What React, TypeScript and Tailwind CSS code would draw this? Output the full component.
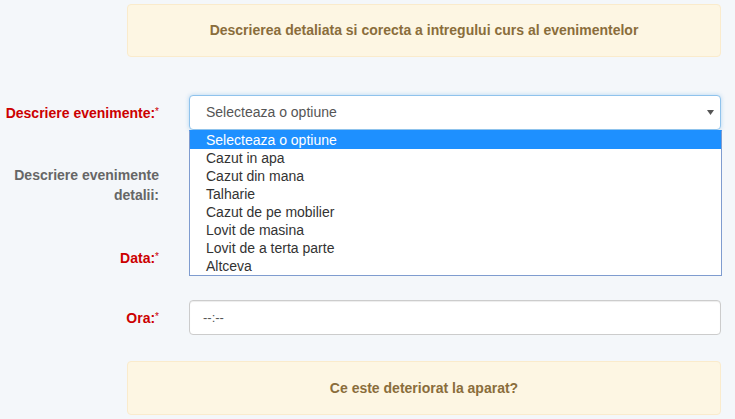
import React from "react";

const options = [
  "Selecteaza o optiune",
  "Cazut in apa",
  "Cazut din mana",
  "Talharie",
  "Cazut de pe mobilier",
  "Lovit de masina",
  "Lovit de a terta parte",
  "Altceva",
];

function Req() {
  return <span className="text-[10px] align-top relative top-[-1px] font-normal">*</span>;
}

export default function App() {
  return (
    <div
      className="w-[735px] h-[419px] bg-[#f4f7fa] overflow-hidden relative text-[14px]"
      style={{ fontFamily: '"Liberation Sans", Arial, sans-serif' }}
    >
      <div className="pt-[4px] pl-[127px] pr-[14px]">
        <div className="h-[53px] rounded-[4px] border border-[#faebcc] bg-[#fdf6e3] flex items-center justify-center">
          <span className="font-bold text-[#8a6d3b]">
            Descrierea detaliata si corecta a intregului curs al evenimentelor
          </span>
        </div>
      </div>

      {/* row 1 */}
      <div className="flex mt-[38px] pr-[14px]">
        <div className="w-[174px] pr-[15px] pt-[8px] text-right font-bold leading-[20px] text-[#cc0000]">
          Descriere evenimente:<Req />
        </div>
        <div className="flex-1 pl-[15px]">
          <div className="h-[35px] rounded-[4px] border border-[#8fc3ec] bg-white shadow-[0_0_4px_rgba(102,175,233,0.45)] flex items-center pl-[16px] pr-[6px] text-[#555]">
            <span className="flex-1">Selecteaza o optiune</span>
            <svg width="7" height="5" viewBox="0 0 7 5">
              <polygon points="0,0 7,0 3.5,5" fill="#555" />
            </svg>
          </div>
        </div>
      </div>

      {/* row 2 */}
      <div className="flex mt-[27px] pr-[14px]">
        <div className="w-[174px] pr-[15px] pt-[8px] text-right font-bold leading-[20px] text-[#666]">
          Descriere evenimente
          <br />
          detalii:
        </div>
        <div className="flex-1 pl-[15px]">
          <div className="h-[58px] rounded-[4px] border border-[#ccc] bg-white" />
        </div>
      </div>

      {/* row 3 */}
      <div className="flex mt-[25px] pr-[14px]">
        <div className="w-[174px] pr-[15px] pt-[8px] text-right font-bold leading-[20px] text-[#cc0000]">
          Data:<Req />
        </div>
        <div className="flex-1 pl-[15px]">
          <div className="h-[35px] rounded-[4px] border border-[#ccc] bg-white" />
        </div>
      </div>

      {/* row 4 */}
      <div className="flex mt-[25px] pr-[14px]">
        <div className="w-[174px] pr-[15px] pt-[8px] text-right font-bold leading-[20px] text-[#cc0000]">
          Ora:<Req />
        </div>
        <div className="flex-1 pl-[15px]">
          <div className="h-[35px] rounded-[4px] border border-[#ccc] bg-white shadow-[inset_0_1px_1px_rgba(0,0,0,0.075)] flex items-center pl-[13px] text-[#555] text-[13px]">
            --:--
          </div>
        </div>
      </div>

      <div className="mt-[26px] pl-[127px] pr-[14px]">
        <div className="h-[54px] rounded-[4px] border border-[#faebcc] bg-[#fdf6e3] flex items-center justify-center">
          <span className="font-bold text-[#8a6d3b]">Ce este deteriorat la aparat?</span>
        </div>
      </div>

      {/* open dropdown list overlay */}
      <div className="absolute left-[189px] top-[130px] w-[533px] border border-[#7f9ccf] border-t-[#1e90ff] bg-white">
        {options.map((o, i) => (
          <div
            key={o}
            className={
              "h-[18px] leading-[18px] pl-[16px] " +
              (i === 0 ? "bg-[#1e90ff] text-white" : "text-[#333]")
            }
          >
            {o}
          </div>
        ))}
      </div>
    </div>
  );
}
